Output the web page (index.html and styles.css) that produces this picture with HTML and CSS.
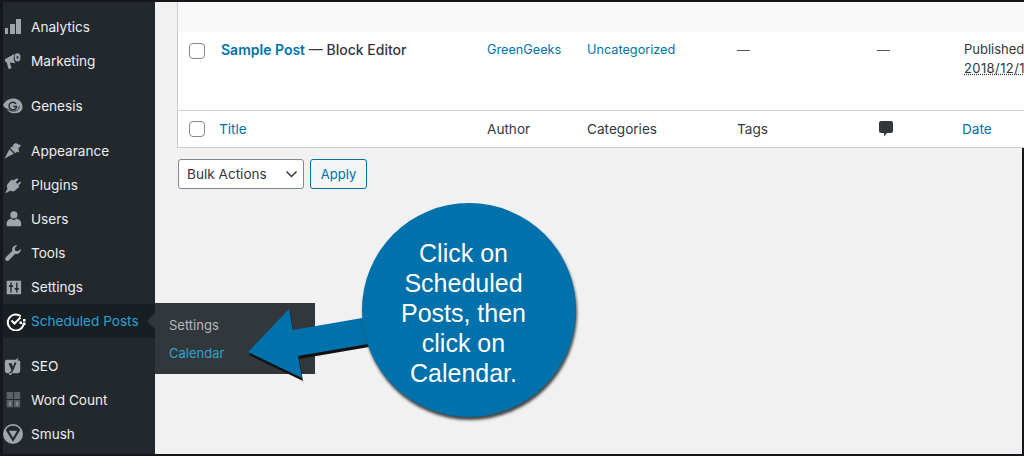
FILE: index.html
```html
<!DOCTYPE html>
<html lang="en">
<head>
    <meta charset="UTF-8">
    <title>Scheduled Posts</title>
    <link rel="stylesheet" href="styles.css">
</head>
<body>
    <div class="screen">
        <nav class="sidebar">
            <a class="item">
                <svg class="icon" viewBox="0 0 20 20"><path d="M1.100 11h3.300v6.800H1.100zM6.700 6.700h5.500v11.100H6.700zM13.300 1.100h5.600v16.700h-5.600z"/></svg>
                Analytics
            </a>
            <a class="item">
                <svg class="icon" viewBox="0 0 20 20"><path d="M1 8l11-6c-1 2-1.500 4-1.200 6.200.3 1.700 1 3 2.200 4.300L6.500 11.600 8.400 18 5 19 3 11.500 1.500 11z"/><path fill-rule="evenodd" d="M15 1.500a3.300 4.500 0 1 1 0 9 3.300 4.500 0 0 1 0-9zm0 3a1 1.500 0 1 0 0 3 1 1.500 0 0 0 0-3z"/></svg>
                Marketing
            </a>
            <a class="item group">
                <svg class="icon wide" viewBox="0 0 22 20"><path d="M0 9c3-6 9-8 14-7 4 1 7.500 4 7.500 9.500 0 4-4 7-9 6.500C8 18 5 15.500 4 13 2.500 12 1 11 0 9z"/><path d="M4 13c3 2 6 3 9 2.500 3-.5 5-3 5-5.500" fill="none" stroke="#23282d"/><path d="M14.300 7.700A4.200 4.200 0 1 0 15 10.500h-3.500" fill="none" stroke="#23282d" stroke-width="1.500"/></svg>
                Genesis
            </a>
            <a class="item group">
                <svg class="icon" viewBox="0 0 20 20"><path d="M10 3l3-2 6 3-3 3 1 5-6-3.500zM9.300 4.500l5.500 6-2.300 2L7 7z"/><path d="M6 8l5 5-4 2c-2 .5-3.500 2-6 3.500 1-3 2-4.500 3-6.500z"/></svg>
                Appearance
            </a>
            <a class="item">
                <svg class="icon" viewBox="0 0 20 20"><path d="M14.500 2.500l1.500 1.500-3 3 2 1.500 3-2.500 1 1.500-3 3 1 1.500-5 4.500c-2 1-3.500 .5-5-.5L3 18.500H1.500L4 14c-1-1.500-1-3 0-5l4.500-5 1.500 1z"/></svg>
                Plugins
            </a>
            <a class="item">
                <svg class="icon" viewBox="0 0 20 20"><circle cx="11" cy="5.500" r="4"/><path d="M8 9.500c-3 .8-5 2.500-5 5V18h16v-3.500c0-2.500-2-4.200-5-5-1 1-1.800 1.500-3 1.500s-2-.5-3-1.500z"/></svg>
                Users
            </a>
            <a class="item">
                <svg class="icon" viewBox="0 0 20 20"><path d="M18.500 5.500c.5 2.500-1 5-3.500 5.500-1 .2-1.800 0-2.500-.2L5.500 18c-1 1-2.500 1-3.500 0s-.8-2.300 0-3.200l7.300-7.300C9 6.500 9 5.500 9.300 4.500 10 2.500 12.500 1 15 1.500l-3 3 .5 3 3 .5z"/></svg>
                Tools
            </a>
            <a class="item">
                <svg class="icon" viewBox="0 0 20 20"><path fill-rule="evenodd" d="M3 3h16v15H3zm4 2v3H5.500v2H7v6h1.500v-6H10V8H8.500V5zm6.500 0v6H12v2h1.500v3H15v-3h1.500v-2H15V5z"/></svg>
                Settings
            </a>
            <a class="item active">
                <svg class="icon clock" viewBox="0 0 20 20"><path d="M14.800 5.200A8 8 0 1 0 17.800 12" fill="none" stroke="#fff" stroke-width="2"/><path d="M5.500 9.500l3 3 6-6" fill="none" stroke="#fff" stroke-width="2"/><path fill="#fff" d="M13.500 10.500h2.500v2.500h-2.500zM17 8h2.500v2.500H17zM17 11.500h2.500V14H17z"/></svg>
                Scheduled Posts
            </a>
            <div class="submenu">
                <a class="sub-item">Settings</a>
                <a class="sub-item current">Calendar</a>
            </div>
            <a class="item group">
                <svg class="icon" viewBox="0 0 20 20"><path fill-rule="evenodd" d="M3 3h10l3-2.500-1 3 3 1V15c0 2-1 3-3 3H9l-1 2H5.500l1-2H4c-2 0-3-1-3-3V5c0-1 1-2 2-2zm2 4l3.500 8c-.5 1-1 1.500-2 1.500V18c2 0 3-1 4-3.500L14 6h-2.500l-1.500 5-1.500-4z"/></svg>
                SEO
            </a>
            <a class="item">
                <svg class="icon faint" viewBox="0 0 20 20"><path d="M3 1h7v8H3zM11 1h7v8h-7zM3 10h7v8H3zM11 10h7v8h-7z"/><path fill="#8b9096" d="M5.500 12h2v4h-2zM13.500 12h2v4h-2z"/></svg>
                Word Count
            </a>
            <a class="item">
                <svg class="icon wide" viewBox="0 0 22 22"><path fill-rule="evenodd" d="M11 0a11 11 0 1 1 0 22 11 11 0 0 1 0-22zM3 6.500l8 13 8-13C17 3.500 14.500 2 11 2S5 3.500 3 6.500zM6.500 7.500h9L11 15z"/></svg>
                Smush
            </a>
        </nav>

        <main class="content">
            <div class="posts">
                <div class="row stripe"></div>
                <div class="row post">
                    <span class="check"></span>
                    <span class="post-title"><a class="strong">Sample Post</a> — Block Editor</span>
                    <a>GreenGeeks</a>
                    <a>Uncategorized</a>
                    <span class="dash">—</span>
                    <span class="dash">—</span>
                    <span class="published">Published<br><u>2018/12/18</u></span>
                </div>
                <div class="row foot">
                    <span class="check"></span>
                    <a class="foot-title">Title</a>
                    <span>Author</span>
                    <span>Categories</span>
                    <span>Tags</span>
                    <span><svg class="bubble" viewBox="0 0 14 16"><path d="M2 0h10a2 2 0 0 1 2 2v8a2 2 0 0 1-2 2H8l-3 3.500V12H2a2 2 0 0 1-2-2V2a2 2 0 0 1 2-2z"/></svg></span>
                    <a class="foot-date">Date</a>
                </div>
            </div>

            <div class="actions">
                <div class="bulk">
                    Bulk Actions
                    <svg class="chevron" viewBox="0 0 12 8"><path d="M1 1.500L6 6.500l5-5" fill="none" stroke="#32373c" stroke-width="1.500"/></svg>
                </div>
                <button class="apply" type="button">Apply</button>
            </div>
        </main>

        <div class="callout">
            <svg class="arrow" viewBox="0 0 130 80" width="130" height="80">
                <path class="arrow-shadow" d="M0 43L41 0 45 21 120 8 120 35 50 47 54 69z"/>
                <path class="arrow-fill" d="M0 43L41 0 45 21 120 8 120 35 50 47 54 69z"/>
            </svg>
            <div class="bubble-note">Click on<br>Scheduled<br>Posts, then<br>click on<br>Calendar.</div>
        </div>
    </div>
</body>
</html>
```

FILE: styles.css
```css
* {
    box-sizing: border-box;
}
body {
    margin: 0;
    background: #000;
    font-family: Inter, "Liberation Sans", sans-serif;
    overflow: hidden;
}
a {
    color: #0073aa;
}
.screen {
    position: relative;
    display: flex;
    width: 1024px;
    height: 456px;
    padding: 2px 2px 2px 3px;
    background: #14181c;
    overflow: hidden;
}

/* admin menu */
.sidebar {
    flex: 0 0 152px;
    position: relative;
    padding-top: 8px;
    background: #23282d;
}
.item {
    display: flex;
    align-items: center;
    gap: 9px;
    height: 34px;
    padding-left: 1px;
    color: #eee;
    font-size: 13.6px;
}
.item.group {
    margin-top: 11px;
}
.icon {
    flex: 0 0 18px;
    width: 18px;
    height: 18px;
    fill: #a0a5aa;
}
.icon.wide {
    flex: 0 0 20px;
    width: 20px;
    height: 20px;
    margin: 0 -1px 0 -1px;
}
.icon.clock {
    flex: 0 0 20px;
    width: 20px;
    height: 20px;
    margin: 0 -4px 0 2px;
}
.icon.faint {
    fill: #5b6066;
}
.active {
    position: relative;
    color: #2ea2cc;
    background: #191e23;
}
.active::after {
    content: "";
    position: absolute;
    right: 0;
    top: 9px;
    border: 8px solid transparent;
    border-left: 0;
    border-right-color: #32373c;
}
.submenu {
    position: absolute;
    left: 152px;
    top: 301px;
    width: 160px;
    height: 71px;
    padding-top: 8px;
    background: #32373c;
}
.sub-item {
    display: flex;
    align-items: center;
    height: 28px;
    padding-left: 14px;
    color: #b4b9be;
    font-size: 13px;
}
.sub-item.current {
    color: #2ea2cc;
}

/* posts list */
.content {
    flex: 1;
    min-width: 0;
    padding-left: 23px;
    background: #f1f1f1;
    color: #32373c;
    font-size: 13px;
}
.posts {
    width: 860px;
    margin-left: -1px;
    border: 1px solid #ccd0d4;
    border-top: 0;
    background: #fff;
}
.row {
    display: grid;
    grid-template-columns: 32px 266px 100px 150px 140px 85px 1fr;
    padding-left: 11px;
}
.stripe {
    height: 30px;
    background: #f9f9f9;
}
.post {
    height: 79px;
    padding-top: 10px;
    border-bottom: 1px solid #ccd0d4;
    font-size: 12.7px;
    line-height: 16px;
}
.foot {
    height: 36px;
    align-items: center;
    font-size: 13.6px;
}
.check {
    width: 16px;
    height: 16px;
    margin-top: 1px;
    border: 1px solid #7e8993;
    border-radius: 4px;
    background: #fff;
}
.foot .check {
    margin-top: 0;
}
.strong {
    font-weight: 600;
    font-size: 14px;
}
.post-title {
    font-size: 14px;
    font-weight: 500;
    color: #32373c;
}
.dash {
    color: #555;
}
.published {
    margin-left: 2px;
    margin-top: -2px;
    font-size: 13px;
    line-height: 19px;
    white-space: nowrap;
}
.published u {
    letter-spacing: 0.4px;
    text-decoration: underline dotted;
}
.foot-title {
    margin-left: -2px;
}
.bubble {
    display: block;
    width: 14px;
    height: 16px;
    margin-left: 2px;
    fill: #32373c;
}
.actions {
    display: flex;
    gap: 6px;
    margin-top: 11px;
}
.bulk {
    display: flex;
    align-items: center;
    justify-content: space-between;
    width: 126px;
    height: 30px;
    padding: 0 5px 0 8px;
    border: 1px solid #7e8993;
    border-radius: 3px;
    background: #fff;
    font-size: 13.6px;
}
.chevron {
    width: 13px;
    height: 8px;
}
.apply {
    width: 57px;
    height: 30px;
    padding: 0;
    border: 1px solid #0071a1;
    border-radius: 3px;
    background: #f3f5f6;
    color: #0071a1;
    font-family: inherit;
    font-size: 13px;
}

/* blue callout over the screenshot */
.callout {
    position: absolute;
    left: 248px;
    top: 203px;
    width: 328px;
    height: 214px;
}
.arrow {
    position: absolute;
    left: 0;
    top: 106px;
}
.arrow-fill {
    fill: #0071aa;
}
.arrow-shadow {
    fill: #111;
    transform: translate(1px, 3px);
}
.bubble-note {
    position: absolute;
    left: 114px;
    top: 0;
    display: flex;
    align-items: center;
    justify-content: center;
    width: 214px;
    height: 214px;
    padding: 6px 11px 0 0;
    border-radius: 50%;
    background: #0071aa;
    box-shadow: 1px 3px 3px #444;
    color: #fff;
    font-family: "Liberation Sans", sans-serif;
    font-size: 25px;
    line-height: 30px;
    text-align: center;
}
```
